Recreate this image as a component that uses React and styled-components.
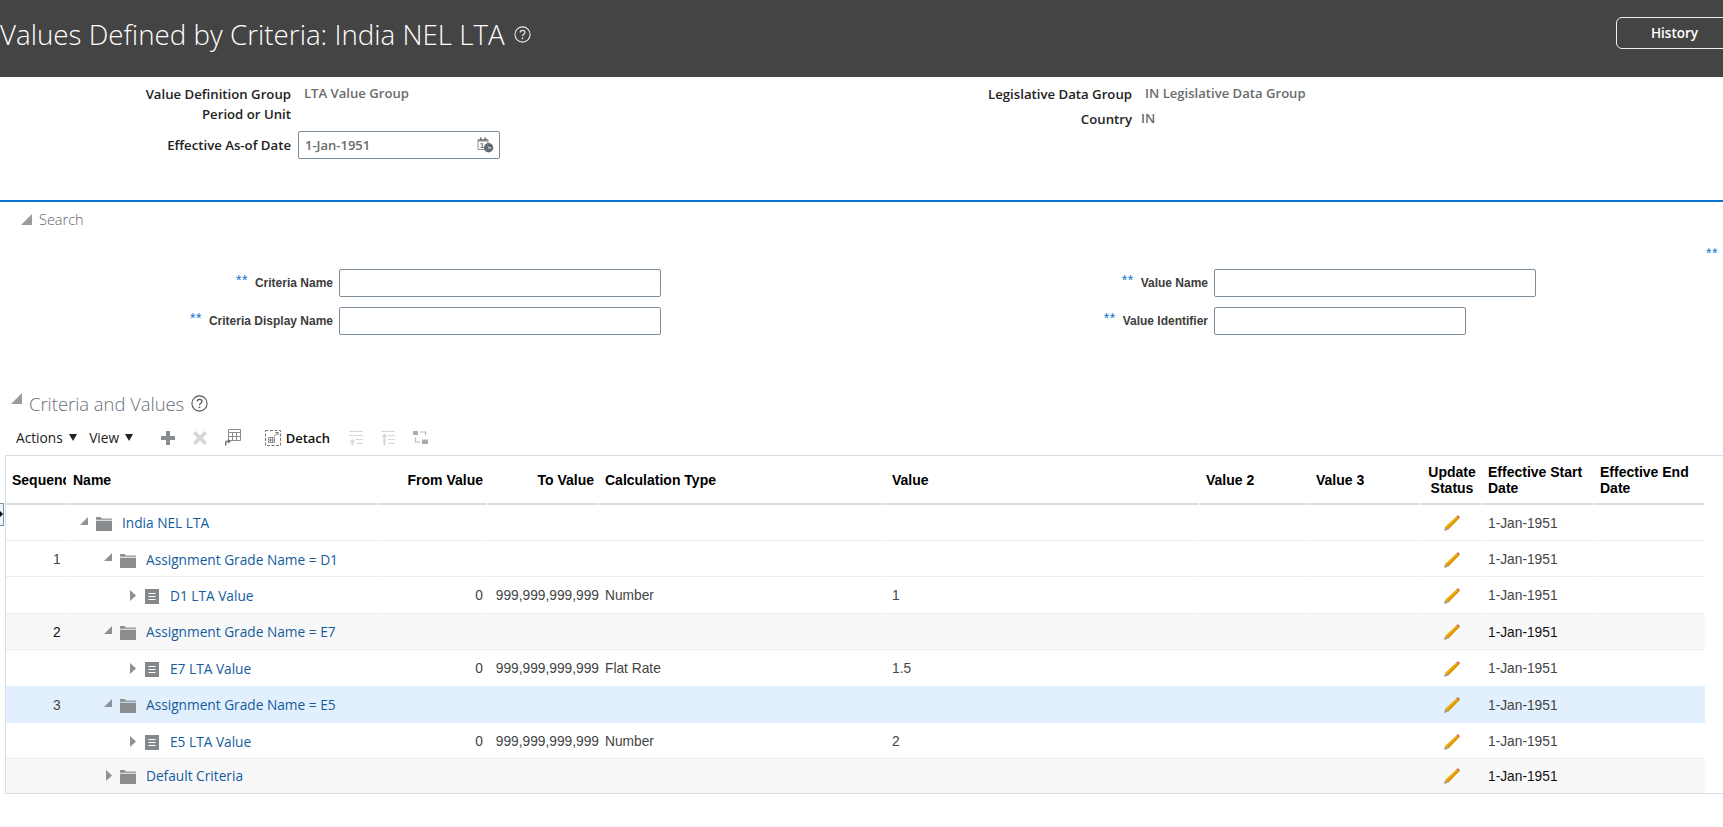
import React from 'react';
import styled, { createGlobalStyle } from 'styled-components';

const COLUMNS = '61px 311px 110px 111px 287px 314px 110px 111px 61px 112px 111px';

const GlobalStyle = createGlobalStyle`
    html, body {
        margin: 0;
        padding: 0;
        background: #fff;
        overflow: hidden;
    }
    body {
        font-family: "Open Sans", "Liberation Sans", sans-serif;
    }
`;

const rows = [
    { level: 0, kind: 'folder', open: true, name: 'India NEL LTA' },
    { level: 1, kind: 'folder', open: true, name: 'Assignment Grade Name = D1', seq: '1' },
    { level: 2, kind: 'doc', name: 'D1 LTA Value', from: '0', to: '999,999,999,999', type: 'Number', value: '1' },
    { level: 1, kind: 'folder', open: true, name: 'Assignment Grade Name = E7', seq: '2', tone: 'alt' },
    { level: 2, kind: 'doc', name: 'E7 LTA Value', from: '0', to: '999,999,999,999', type: 'Flat Rate', value: '1.5', flush: true },
    { level: 1, kind: 'folder', open: true, name: 'Assignment Grade Name = E5', seq: '3', tone: 'selected', flush: true },
    { level: 2, kind: 'doc', name: 'E5 LTA Value', from: '0', to: '999,999,999,999', type: 'Number', value: '2' },
    { level: 1, kind: 'folder', open: false, name: 'Default Criteria', tone: 'alt', flush: true, last: true },
];

const HelpIcon = ({ size = 17, color = '#555' }) => (
    <svg width={size} height={size} viewBox="0 0 17 17" fill="none">
        <circle cx="8.5" cy="8.5" r="7.6" stroke={color} strokeWidth="1.1" />
        <path d="M6.2 6.6c0-1.4 1-2.2 2.4-2.2s2.3.8 2.3 2c0 1.9-2.4 1.9-2.4 3.8" stroke={color} strokeWidth="1.2" />
        <circle cx="8.5" cy="12.3" r=".9" fill={color} />
    </svg>
);

const CalendarIcon = () => (
    <svg width="17" height="16" viewBox="0 0 17 16">
        <path d="M1 2.5h10v10H1z" fill="#fff" stroke="#8a8f93" />
        <path d="M1 2h10v2.5H1z" fill="#8a8f93" />
        <path d="M3 .5h1.6v3H3zM7.4.5H9v3H7.4z" fill="#6f7478" />
        <text x="3" y="11" fontSize="7" fontFamily="Liberation Sans, sans-serif" fontWeight="700" fill="#666">1</text>
        <circle cx="11.6" cy="10.8" r="4.7" fill="#666b6f" />
        <path d="M11 9.8l1.2 1.4 2-.4" stroke="#fff" strokeWidth="1" fill="none" />
    </svg>
);

const FolderIcon = () => (
    <svg width="16" height="14" viewBox="0 0 16 14">
        <path d="M0 1.2C0 .5.4 0 1 0h3.6l1 1.5H15c.6 0 1 .4 1 1v.3H0z" fill="#8a8d90" />
        <path d="M0 3.7h16V14H0z" fill="#8a8d90" />
    </svg>
);

const DocIcon = () => (
    <svg width="14" height="15" viewBox="0 0 14 15">
        <rect width="14" height="15" fill="#85888b" />
        <path d="M3.5 4.5h7M3.5 7.5h7M3.5 10.5h7" stroke="#fff" strokeWidth="1" />
    </svg>
);

const OpenArrow = () => (
    <svg width="8" height="8" viewBox="0 0 8 8"><path d="M8 0v8H0z" fill="#8f9295" /></svg>
);

const ClosedArrow = () => (
    <svg width="6" height="11" viewBox="0 0 6 11"><path d="M0 0l6 5.5L0 11z" fill="#8f9295" /></svg>
);

const PencilIcon = () => (
    <svg width="16" height="16" viewBox="0 0 16 16">
        <path d="M1.2 11.8L12.6 1.2 15 3.6 4 14.800z" fill="#edae12" />
        <path d="M2.600 13.300L13.800 2.400 15 3.600 4 14.800z" fill="#d49608" />
        <path d="M1.200 11.800L4 14.800 0 16z" fill="#a39a8c" />
        <path d="M12.600 1.200L13.800 0 16 2.300 15 3.600z" fill="#d0644f" />
    </svg>
);

const AddIcon = () => (
    <svg width="14" height="14" viewBox="0 0 14 14"><path d="M5 0h4v5h5v4H9v5H5V9H0V5h5z" fill="#8a8d90" /></svg>
);

const RemoveIcon = () => (
    <svg width="14" height="14" viewBox="0 0 14 14"><path d="M2.5 0L7 4.5 11.5 0 14 2.5 9.5 7 14 11.5 11.5 14 7 9.5 2.5 14 0 11.5 4.5 7 0 2.5z" fill="#d5d6d7" /></svg>
);

const FreezeIcon = () => (
    <svg width="16" height="17" viewBox="0 0 16 17" fill="none">
        <path d="M3.5.5h12v11h-12zM3.5 3.5h12M7.5 3.5v8M11.5 3.5v8M3.5 7.5h12" stroke="#8a8d90" />
        <path d="M.8 16.5V13.600c0-.8.5-1.300 1.300-1.300h1.400" stroke="#6f7275" strokeWidth="1.500" />
        <path d="M3 9.800l3 2.500-3 2.500z" fill="#6f7275" />
    </svg>
);

const DetachIcon = () => (
    <svg width="16" height="16" viewBox="0 0 16 16" fill="none">
        <path d="M.5.5h15v15H.5z" stroke="#777" strokeDasharray="3 1.500" />
        <path d="M3.500 7.500h6v5h-6zM5.500 7.500v5M7.500 7.500v5M3.500 10h6" stroke="#777" strokeWidth=".8" />
        <path d="M9 6.500l4-4M10.500 2.500H13V5" stroke="#777" />
    </svg>
);

const IndentIcon = () => (
    <svg width="14" height="14" viewBox="0 0 14 14" fill="none">
        <path d="M0 .5h14M0 4.500h14M7 8.500h7M7 12.500h7" stroke="#d5d6d7" />
        <path d="M3.500 8L.5 11h2v3h2v-3h2z" fill="#d5d6d7" />
    </svg>
);

const OutdentIcon = () => (
    <svg width="14" height="14" viewBox="0 0 14 14" fill="none">
        <path d="M0 .5h14M7 4.500h7M7 8.500h7M7 12.500h7" stroke="#d5d6d7" />
        <path d="M3.500 2.500L.5 5.500h2V14h2V5.500h2z" fill="#d5d6d7" />
    </svg>
);

const HierarchyIcon = () => (
    <svg width="15" height="15" viewBox="0 0 15 15" fill="none">
        <path d="M0 1h5v4H0zM9 9.500h6v4.500H9z" fill="#a9abad" />
        <path d="M7 2h5.500v3M2.500 7.500v4.500H7.500" stroke="#b9babc" strokeWidth="1.200" />
    </svg>
);

const App = () => {
    return (
        <Page>
            <GlobalStyle />
            <TitleBar>
                <TitleGroup>
                    <PageTitle>Values Defined by Criteria: India NEL LTA</PageTitle>
                    <HelpIcon size={17} color="#e8e8e8" />
                </TitleGroup>
                <HistoryButton>History</HistoryButton>
            </TitleBar>

            <SummaryGrid>
                <SummaryColumn>
                    <SummaryRow $w={291} $h={20}>
                        <SummaryLabel>Value Definition Group</SummaryLabel>
                        <SummaryValue>LTA Value Group</SummaryValue>
                    </SummaryRow>
                    <SummaryRow $w={291} $h={20}>
                        <SummaryLabel>Period or Unit</SummaryLabel>
                    </SummaryRow>
                    <SummaryRow $w={291} $h={28} $top={7}>
                        <SummaryLabel>Effective As-of Date</SummaryLabel>
                        <DateBox>
                            <span>1-Jan-1951</span>
                            <CalendarIcon />
                        </DateBox>
                    </SummaryRow>
                </SummaryColumn>
                <SummaryColumn>
                    <SummaryRow $w={272} $h={20}>
                        <SummaryLabel>Legislative Data Group</SummaryLabel>
                        <SummaryValue>IN Legislative Data Group</SummaryValue>
                    </SummaryRow>
                    <SummaryRow $w={272} $h={20} $top={5}>
                        <SummaryLabel>Country</SummaryLabel>
                        <SummaryValue $narrow>IN</SummaryValue>
                    </SummaryRow>
                </SummaryColumn>
            </SummaryGrid>

            <SearchHeader>
                <OpenArrowLarge />
                <SearchTitle>Search</SearchTitle>
                <CutOffStars>**</CutOffStars>
            </SearchHeader>

            <SearchForm>
                <SearchColumn>
                    <SearchRow $w={661}>
                        <Stars>**</Stars>
                        <SearchLabel>Criteria Name</SearchLabel>
                        <TextBox $w={322} />
                    </SearchRow>
                    <SearchRow $w={661}>
                        <Stars>**</Stars>
                        <SearchLabel>Criteria Display Name</SearchLabel>
                        <TextBox $w={322} />
                    </SearchRow>
                </SearchColumn>
                <SearchColumn>
                    <SearchRow $w={676}>
                        <Stars>**</Stars>
                        <SearchLabel>Value Name</SearchLabel>
                        <TextBox $w={322} />
                    </SearchRow>
                    <SearchRow $w={606}>
                        <Stars>**</Stars>
                        <SearchLabel>Value Identifier</SearchLabel>
                        <TextBox $w={252} />
                    </SearchRow>
                </SearchColumn>
            </SearchForm>

            <SectionHeader>
                <SectionArrow />
                <SectionTitle>Criteria and Values</SectionTitle>
                <HelpIcon />
            </SectionHeader>

            <Toolbar>
                <MenuButton>Actions<Caret /></MenuButton>
                <MenuButton>View<Caret /></MenuButton>
                <ToolIcons>
                    <AddIcon />
                    <RemoveIcon />
                    <FreezeIcon />
                </ToolIcons>
                <DetachButton><DetachIcon />Detach</DetachButton>
                <ToolIcons $left={19}>
                    <IndentIcon />
                    <OutdentIcon />
                    <HierarchyIcon />
                </ToolIcons>
            </Toolbar>

            <TableFrame>
                <RowMarker />
                <HeaderRow>
                    <HeaderCell $clip>Sequence</HeaderCell>
                    <HeaderCell>Name</HeaderCell>
                    <HeaderCell $align="right">From Value</HeaderCell>
                    <HeaderCell $align="right">To Value</HeaderCell>
                    <HeaderCell>Calculation Type</HeaderCell>
                    <HeaderCell>Value</HeaderCell>
                    <HeaderCell>Value 2</HeaderCell>
                    <HeaderCell>Value 3</HeaderCell>
                    <HeaderCell $align="center">Update Status</HeaderCell>
                    <HeaderCell>Effective Start Date</HeaderCell>
                    <HeaderCell>Effective End Date</HeaderCell>
                </HeaderRow>
                {rows.map((row) => (
                    <DataRow key={row.name} $tone={row.tone} $last={row.last} $flush={row.flush}>
                        <SeqCell>{row.seq}</SeqCell>
                        <TreeCell>
                            <TreeIndent $level={row.level}>
                                <ArrowSlot $open={row.open}>
                                    {row.open ? <OpenArrow /> : <ClosedArrow />}
                                </ArrowSlot>
                                <IconSlot>
                                    {row.kind === 'folder' ? <FolderIcon /> : <DocIcon />}
                                </IconSlot>
                                <TreeLink>{row.name}</TreeLink>
                            </TreeIndent>
                        </TreeCell>
                        <DataCell $align="right">{row.from}</DataCell>
                        <DataCell $align="right" $tight>{row.to}</DataCell>
                        <DataCell>{row.type}</DataCell>
                        <DataCell>{row.value}</DataCell>
                        <DataCell />
                        <DataCell />
                        <DataCell $align="center"><PencilIcon /></DataCell>
                        <DataCell>1-Jan-1951</DataCell>
                        <DataCell />
                    </DataRow>
                ))}
            </TableFrame>
        </Page>
    );
};

export default App;

const justify = (p) => {
    if (p.$align === 'right') return 'flex-end';
    if (p.$align === 'center') return 'center';
    return 'flex-start';
};

const Page = styled.div`
    width: 1723px;
    height: 827px;
    overflow: hidden;
    background: #fff;
`;

const TitleBar = styled.div`
    height: 77px;
    background: #444;
    display: flex;
    justify-content: space-between;
    color: #fff;
    box-sizing: border-box;
    padding-top: 17px;
`;

const TitleGroup = styled.div`
    display: flex;
    align-items: center;
    gap: 9px;
    height: 36px;
    margin-top: -1px;
`;

const PageTitle = styled.h1`
    margin: 0;
    font-size: 27.75px;
    font-weight: 300;
    line-height: 36px;
    white-space: nowrap;
`;

const HistoryButton = styled.button`
    width: 117px;
    height: 32px;
    margin-right: -10px;
    padding: 0;
    background: transparent;
    color: #fff;
    border: 1px solid #eee;
    border-radius: 6px;
    font-family: inherit;
    font-size: 13.5px;
    font-weight: 600;
    text-align: center;
`;

const SummaryGrid = styled.div`
    height: 125px;
    display: grid;
    grid-template-columns: 860px 1fr;
    padding-top: 7px;
    box-sizing: border-box;
    border-bottom: 2px solid #0572ce;
`;

const SummaryColumn = styled.div`
    display: flex;
    flex-direction: column;
`;

const SummaryRow = styled.div`
    display: grid;
    grid-template-columns: ${(p) => p.$w}px 1fr;
    column-gap: 6px;
    align-items: center;
    height: ${(p) => p.$h}px;
    margin-top: ${(p) => p.$top || 0}px;
`;

const SummaryLabel = styled.div`
    color: #222;
    font-size: 13.2px;
    font-weight: 600;
    text-align: right;
    white-space: nowrap;
`;

const SummaryValue = styled.div`
    color: #6b6b6b;
    font-size: 13.1px;
    font-weight: 600;
    white-space: nowrap;
    margin-left: ${(p) => (p.$narrow ? 3 : 7)}px;
    margin-top: -2px;
`;

const DateBox = styled.div`
    width: 202px;
    height: 28px;
    margin-left: 1px;
    box-sizing: border-box;
    border: 1px solid #7d8c99;
    border-radius: 2px;
    display: flex;
    align-items: center;
    justify-content: space-between;
    padding: 0 5px 0 6px;
    color: #6b6b6b;
    font-size: 13px;
    font-weight: 600;
`;

const SearchHeader = styled.div`
    position: relative;
    height: 34px;
    display: flex;
    align-items: center;
    padding-left: 21px;
    gap: 7px;
`;

const OpenArrowLarge = styled.span`
    display: block;
    width: 0;
    height: 0;
    border-style: solid;
    border-width: 0 0 11px 11px;
    border-color: transparent transparent #9a9da0 transparent;
`;

const SearchTitle = styled.span`
    color: #666;
    font-size: 14.5px;
    font-weight: 300;
`;

const CutOffStars = styled.span`
    position: absolute;
    left: 1706px;
    top: 43px;
    color: #0572ce;
    font-family: "Liberation Sans", sans-serif;
    font-size: 14px;
    letter-spacing: .5px;
    white-space: nowrap;
`;

const SearchForm = styled.div`
    display: grid;
    grid-template-columns: 860px 1fr;
    padding-top: 33px;
    height: 155px;
    box-sizing: border-box;
`;

const SearchColumn = styled.div`
    display: flex;
    flex-direction: column;
    gap: 10px;
`;

const SearchRow = styled.div`
    display: flex;
    align-items: center;
    height: 28px;
    justify-content: flex-end;
    width: ${(p) => p.$w}px;
`;

const Stars = styled.span`
    color: #0572ce;
    font-family: "Liberation Sans", sans-serif;
    font-size: 14px;
    letter-spacing: .5px;
    margin-right: 7px;
    position: relative;
    top: -3px;
`;

const SearchLabel = styled.label`
    color: #3d3d3d;
    font-family: "Liberation Sans", sans-serif;
    font-size: 12px;
    font-weight: 700;
    margin-right: 6px;
    margin-top: -1px;
    white-space: nowrap;
`;

const TextBox = styled.input`
    width: ${(p) => p.$w}px;
    height: 28px;
    box-sizing: border-box;
    border: 1px solid #7d8c99;
    border-radius: 2px;
    background: #fff;
`;

const SectionHeader = styled.div`
    display: flex;
    align-items: center;
    height: 24px;
    padding-left: 11px;
`;

const SectionArrow = styled(OpenArrowLarge)`
    margin: -10px 7px 0 0;
`;

const SectionTitle = styled.h2`
    margin: 0 7px 0 0;
    color: #66707a;
    font-size: 18.4px;
    font-weight: 300;
    white-space: nowrap;
`;

const Toolbar = styled.div`
    display: flex;
    align-items: center;
    height: 35px;
    margin-top: 5px;
    padding-left: 16px;
`;

const MenuButton = styled.div`
    display: flex;
    align-items: center;
    gap: 6px;
    margin-right: 12.5px;
    color: #222;
    font-size: 13.7px;
`;

const Caret = styled.span`
    display: block;
    width: 0;
    height: 0;
    border-style: solid;
    border-width: 7px 4.5px 0;
    border-color: #222 transparent transparent;
`;

const ToolIcons = styled.div`
    display: flex;
    align-items: center;
    gap: 18px;
    margin-left: ${(p) => p.$left || 15}px;
`;

const DetachButton = styled.div`
    display: flex;
    align-items: center;
    gap: 5px;
    margin-left: 24px;
    color: #111;
    font-size: 13px;
    font-weight: 600;
`;

const TableFrame = styled.div`
    position: relative;
    margin: 0 0 0 5px;
    border: solid #d6dfe6;
    border-width: 1px 0 1px 1px;
    box-sizing: border-box;
    width: 1718px;
    height: 339px;
    font-family: "Liberation Sans", sans-serif;
`;

const RowMarker = styled.div`
    position: absolute;
    left: -6px;
    top: 47px;
    width: 3px;
    height: 21px;
    border: 1px solid #7d95a8;
    border-left: 0;
    background: #f0f4f8;
    &::after {
        content: '';
        position: absolute;
        left: 0;
        top: 7px;
        border-style: solid;
        border-width: 3px 0 3px 3px;
        border-color: transparent transparent transparent #000;
    }
`;

const HeaderRow = styled.div`
    display: grid;
    grid-template-columns: ${COLUMNS};
    height: 48.5px;
    width: 1699px;
`;

const HeaderCell = styled.div`
    display: flex;
    align-items: center;
    justify-content: ${justify};
    text-align: ${(p) => p.$align || 'left'};
    margin-right: 1px;
    padding: 2px 4px 0 6px;
    box-sizing: border-box;
    overflow: hidden;
    border-bottom: 2px solid #d6dfe6;
    white-space: ${(p) => (p.$clip ? 'nowrap' : 'normal')};
    color: #000;
    font-size: 14px;
    font-weight: 700;
    line-height: 16px;
`;

const toneColor = {
    alt: '#f8f8f8',
    selected: '#e2effc',
};

const DataRow = styled.div`
    --row-line: ${(p) => (p.$flush ? 'transparent' : '#ececec')};
    display: grid;
    grid-template-columns: ${COLUMNS};
    height: ${(p) => (p.$last ? '33.5px' : '36.4px')};
    width: 1699px;
    background: ${(p) => toneColor[p.$tone] || '#fff'};
    color: ${(p) => (p.$tone === 'alt' ? '#111' : '#444')};
`;

const DataCell = styled.div`
    display: flex;
    align-items: center;
    justify-content: ${justify};
    margin-right: ${(p) => (p.$tight ? 0 : 1)}px;
    padding: ${(p) => (p.$tight ? '2px 0 0' : '2px 4px 0 6px')};
    box-sizing: border-box;
    border-bottom: 1px solid var(--row-line);
    font-size: 13.75px;
    white-space: nowrap;
`;

const SeqCell = styled(DataCell)`
    padding-left: 47px;
`;

const TreeCell = styled.div`
    display: flex;
    align-items: center;
    margin-right: 1px;
    padding-top: 1px;
    box-sizing: border-box;
    border-bottom: 1px solid var(--row-line);
`;

const TreeIndent = styled.div`
    display: flex;
    align-items: center;
    margin-left: ${(p) => 13 + p.$level * 24}px;
`;

const ArrowSlot = styled.span`
    display: flex;
    justify-content: flex-end;
    width: 8px;
    margin-right: 8px;
    margin-bottom: ${(p) => (p.$open ? 4 : 0)}px;
`;

const IconSlot = styled.span`
    display: flex;
    align-items: center;
    justify-content: center;
    width: 16px;
    margin-right: 10px;
    margin-top: 3px;
`;

const TreeLink = styled.a`
    color: #145c9e;
    font-family: "Open Sans", sans-serif;
    font-size: 13.7px;
    font-weight: 500;
    white-space: nowrap;
`;
